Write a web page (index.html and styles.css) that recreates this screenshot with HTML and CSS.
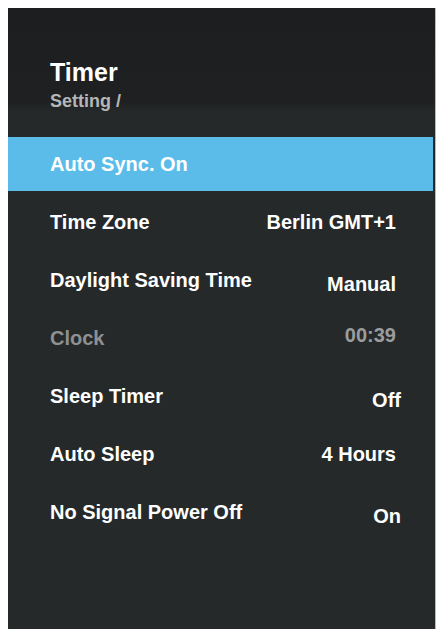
FILE: index.html
```html
<!DOCTYPE html>
<html>
<head>
	<meta charset="UTF-8">
	<title>Timer</title>
	<link rel="stylesheet" href="styles.css">
</head>
<body>
<div id="ID_Panel">

	<div id="ID_Header">
		<h1 id="ID_TITLE">Timer</h1>
		<h3 id="ID_SUBTITLE">Setting /</h3>
	</div>

	<div id="ID_LIST">
		<div class="CLS_Row CLS_Active">
			<span class="CLS_Label">Auto Sync. On</span>
		</div>
		<div class="CLS_Row">
			<span class="CLS_Label">Time Zone</span>
			<span class="CLS_Value">Berlin GMT+1</span>
		</div>
		<div class="CLS_Row">
			<span class="CLS_Label">Daylight Saving Time</span>
			<span class="CLS_Value CLS_Low">Manual</span>
		</div>
		<div class="CLS_Row CLS_Disabled">
			<span class="CLS_Label">Clock</span>
			<span class="CLS_Value CLS_High">00:39</span>
		</div>
		<div class="CLS_Row">
			<span class="CLS_Label">Sleep Timer</span>
			<span class="CLS_Value CLS_Low CLS_Far">Off</span>
		</div>
		<div class="CLS_Row">
			<span class="CLS_Label">Auto Sleep</span>
			<span class="CLS_Value">4 Hours</span>
		</div>
		<div class="CLS_Row">
			<span class="CLS_Label">No Signal Power Off</span>
			<span class="CLS_Value CLS_Low CLS_Far">On</span>
		</div>
	</div>

</div>
</body>
</html>
```

FILE: styles.css
```css
html, body {
	height: 100%;
}

body {
	margin: 0;
	background: #FFFFFF;
	font-family: "Liberation Sans", Arial, Helvetica, sans-serif;
	font-weight: bold;
	overflow: hidden;
}

#ID_Panel {
	margin: 8px 0 0 8px;
	width: 427px;
	height: 621px;
	background: #25292A;
	border-right: 1px solid #B8BBBC;
}

#ID_Header {
	height: 129px;
	box-sizing: border-box;
	padding: 52px 0 0 42px;
	background: linear-gradient(to bottom, #1C1E1F 0, #1E2021 94px, #26292A 104px, #26292A 129px);
}

#ID_TITLE {
	margin: 0;
	font-size: 25px;
	line-height: 1;
	color: #FFFFFF;
}

#ID_SUBTITLE {
	margin: 7px 0 0 0;
	font-size: 18px;
	line-height: 1;
	color: #B4B6B7;
}

#ID_LIST {
	display: flex;
	flex-direction: column;
	gap: 4px;
}

.CLS_Row {
	height: 54px;
	display: flex;
	align-items: center;
	justify-content: space-between;
	padding: 0 37px 0 42px;
	margin-right: 2px;
	font-size: 20px;
	color: #FFFFFF;
}

.CLS_Active {
	background: #5BBCEA;
}

.CLS_Disabled {
	color: #8E9091;
}

.CLS_Disabled .CLS_Value {
	color: #9A9C9D;
}

.CLS_Low {
	position: relative;
	top: 4px;
}

.CLS_High {
	position: relative;
	top: -3px;
}

.CLS_Far {
	margin-right: -5px;
}
```
